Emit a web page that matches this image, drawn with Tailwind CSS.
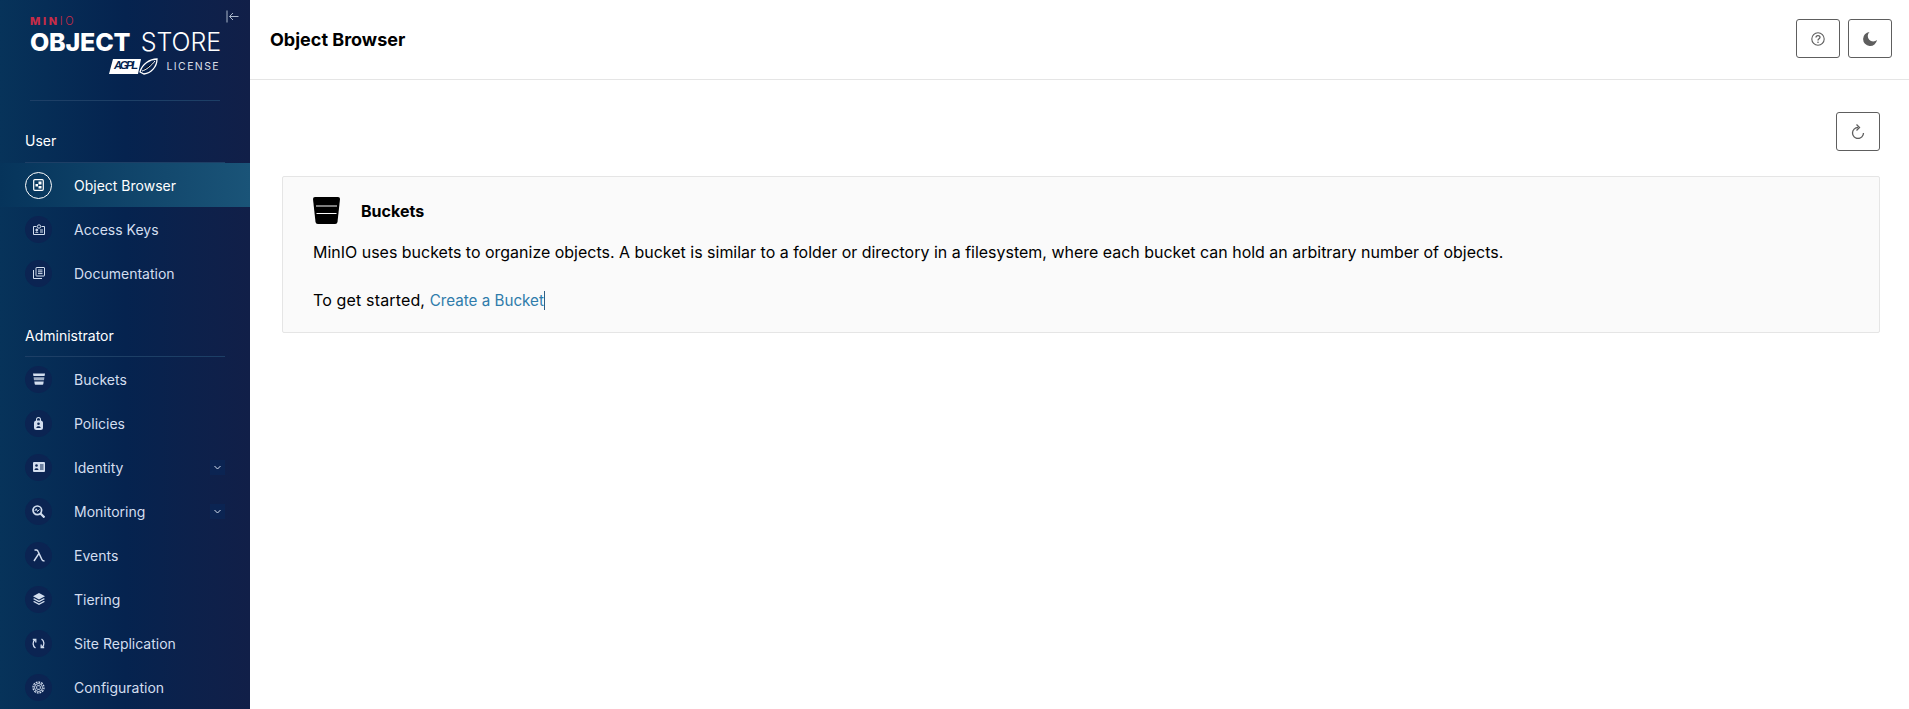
<!DOCTYPE html>
<html lang="en">
<head>
  <meta charset="UTF-8" />
  <title>MinIO Object Store</title>
  <script src="https://cdn.jsdelivr.net/npm/@tailwindcss/browser@4"></script>
</head>
<body class="bg-white text-black font-['Inter',sans-serif] h-[709px] overflow-hidden">
<div class="flex h-[709px]">

  <!-- Sidebar -->
  <aside class="w-[250px] shrink-0 h-full relative overflow-hidden bg-gradient-to-r from-[#07335a] via-[#05234f] to-[#111f48] text-[#d3deef]">
    <button class="absolute left-[226px] top-[10px] text-[#a9b6c9]">
      <svg width="13" height="13" viewBox="0 0 13 13" fill="none" stroke="currentColor" stroke-width="1"><path d="M1 .5v12M12.500 6.500H3.500M7 3 3.500 6.500 7 10"/></svg>
    </button>

    <!-- Logo -->
    <div class="h-[100px] pl-[30px]">
      <div class="pt-[15px] h-[27px] text-[#c72c48] text-[11px] leading-[12px] tracking-[2.600px]"><span class="font-extrabold">MIN</span><span class="font-light">IO</span></div>
      <div class="flex justify-between items-center h-[24px] mt-[3px] text-white text-[25px] leading-[24px] whitespace-nowrap w-[191px]"><span class="font-extrabold tracking-[-0.2px]">OBJECT</span><span class="font-light tracking-[-0.1px]">STORE</span></div>
      <div class="flex justify-end items-center gap-[9px] w-[190px] mt-[4px]">
        <svg width="49" height="17" viewBox="0 0 49 17">
          <path d="M4 1h28l-3 15H0z" fill="#fff"/>
          <text x="5" y="11" font-size="11" font-style="italic" font-weight="700" font-family="Liberation Sans" fill="#05234f" textLength="24">AGPL</text>
          <path d="M31 14C33 6 41 1 48 1c0 8-6 14-13 15z" fill="none" stroke="#fff" stroke-width="1.300"/>
          <path d="M33 13c4-1 9-5 13-10" stroke="#fff" stroke-width="1"/>
        </svg>
        <span class="text-[10.500px] leading-[14px] tracking-[1.400px] text-[#d9dfe8]">LICENSE</span>
      </div>
    </div>

    <div class="mx-[30px] border-t border-[#1d3f66]"></div>

    <!-- User -->
    <div class="mt-[31px] mx-[25px] h-[31px] border-b border-[#1d3f66] text-white text-[14px] leading-[18px] w-[200px]">User</div>
    <nav>
      <a class="h-[44px] flex items-center pl-[25px] bg-gradient-to-r from-[#06345b] to-[#1a5478] text-white">
        <span class="w-[27px] h-[27px] rounded-full border border-white flex items-center justify-center">
          <svg width="11" height="12" viewBox="0 0 11 12" fill="none"><rect x=".7" y=".7" width="9.600" height="10.600" rx="1" stroke="#fff" stroke-width="1.200"/><rect x="5.500" y="2.500" width="3" height="3" fill="#fff"/><rect x="2.500" y="5" width="2.500" height="2.500" fill="#fff"/><rect x="5.500" y="7" width="3" height="2.500" fill="#fff"/></svg>
        </span>
        <span class="ml-[22px] text-[14px]">Object Browser</span>
      </a>
      <a class="h-[44px] flex items-center pl-[25px]">
        <span class="w-[27px] h-[27px] rounded-full bg-[#0b2452] flex items-center justify-center">
          <svg width="12" height="11" viewBox="0 0 12 11" fill="none" stroke="#d3deef"><path d="M3.500 2.500H.5v8h11v-8H8.500"/><circle cx="6" cy="2.500" r="1.700"/><circle cx="3.800" cy="6" r="1" fill="#d3deef"/><path d="M2.300 9c.3-1 2.700-1 3 0M7 6h3M7 8h3"/></svg>
        </span>
        <span class="ml-[22px] text-[14px]">Access Keys</span>
      </a>
      <a class="h-[44px] flex items-center pl-[25px]">
        <span class="w-[27px] h-[27px] rounded-full bg-[#0b2452] flex items-center justify-center">
          <svg width="12" height="12" viewBox="0 0 12 12" fill="none" stroke="#d3deef"><rect x="3" y=".5" width="8.500" height="8.500" rx=".5"/><path d="M.5 3v8.500H9M5 3h4.500M5 4.800h4.500M5 6.600h4.500"/></svg>
        </span>
        <span class="ml-[22px] text-[14px]">Documentation</span>
      </a>
    </nav>

    <!-- Administrator -->
    <div class="mt-[31px] mx-[25px] h-[31px] border-b border-[#1d3f66] text-white text-[14px] leading-[20px] w-[200px]">Administrator</div>
    <nav>
      <a class="h-[44px] flex items-center pl-[25px]">
        <span class="w-[27px] h-[27px] rounded-full bg-[#0b2452] flex items-center justify-center">
          <svg width="12" height="12" viewBox="0 0 12 12" fill="#d3deef"><path d="M0 .5h12L11.600 3H.4z"/><path d="M.6 4.300h10.800L11 7.300H1z" opacity=".75"/><path d="M1.300 8.500h9.400L10.300 11q-.1.800-.8.800h-7q-.7 0-.8-.8z"/></svg>
        </span>
        <span class="ml-[22px] text-[14px]">Buckets</span>
      </a>
      <a class="h-[44px] flex items-center pl-[25px]">
        <span class="w-[27px] h-[27px] rounded-full bg-[#0b2452] flex items-center justify-center">
          <svg width="9" height="13" viewBox="0 0 9 13" fill="#d3deef"><path d="M2 4V2.500a2.500 2.500 0 0 1 5 0V4h-1V2.500a1.500 1.500 0 0 0-3 0V4z"/><rect y="3.500" width="9" height="9.500" rx="2.500"/><circle cx="4.500" cy="6.800" r="1.300" fill="#0b2452"/><path d="M2.300 11c0-2.400 4.400-2.400 4.400 0z" fill="#0b2452"/></svg>
        </span>
        <span class="ml-[22px] text-[14px]">Policies</span>
      </a>
      <a class="h-[44px] flex items-center pl-[25px] pr-[25px]">
        <span class="w-[27px] h-[27px] rounded-full bg-[#0b2452] flex items-center justify-center">
          <svg width="12" height="10" viewBox="0 0 12 10" fill="#d3deef"><path d="M1 0h10q1 0 1 1v8q0 1-1 1H1q-1 0-1-1V1q0-1 1-1z"/><circle cx="3.500" cy="3.500" r="1.300" fill="#0b2452"/><path d="M1.500 8c0-2.500 4-2.500 4 0z" fill="#0b2452"/><rect x="7" y="2.500" width="3.500" height="1" fill="#0b2452"/><rect x="7" y="4.500" width="3.500" height="1" fill="#0b2452"/><rect x="7" y="6.500" width="3.500" height="1" fill="#0b2452"/></svg>
        </span>
        <span class="ml-[22px] text-[14px]">Identity</span>
        <span class="ml-auto w-[15px] h-[15px] bg-[#0b2452] flex items-center justify-center">
          <svg width="7" height="5" viewBox="0 0 7 5" fill="none" stroke="#d3deef"><path d="M.5 1 3.500 4 6.500 1"/></svg>
        </span>
      </a>
      <a class="h-[44px] flex items-center pl-[25px] pr-[25px]">
        <span class="w-[27px] h-[27px] rounded-full bg-[#0b2452] flex items-center justify-center">
          <svg width="13" height="13" viewBox="0 0 13 13" fill="none" stroke="#d3deef" stroke-width="1.700"><circle cx="5.300" cy="5.300" r="4.300"/><path d="M8.500 8.500l4 4" stroke-width="2.200"/><path d="M2.800 6 4.300 3.800 5.500 6.500 7.500 4.500" stroke-width="1"/></svg>
        </span>
        <span class="ml-[22px] text-[14px]">Monitoring</span>
        <span class="ml-auto w-[15px] h-[15px] bg-[#0b2452] flex items-center justify-center">
          <svg width="7" height="5" viewBox="0 0 7 5" fill="none" stroke="#d3deef"><path d="M.5 1 3.500 4 6.500 1"/></svg>
        </span>
      </a>
      <a class="h-[44px] flex items-center pl-[25px]">
        <span class="w-[27px] h-[27px] rounded-full bg-[#0b2452] flex items-center justify-center">
          <svg width="12" height="13" viewBox="0 0 12 13" fill="none" stroke="#d3deef" stroke-width="1.500"><path d="M1.500 1H3.500Q4.500 1 5 2.300L9 10.700Q9.400 12 11.500 12M5.800 4.700 1 12"/></svg>
        </span>
        <span class="ml-[22px] text-[14px]">Events</span>
      </a>
      <a class="h-[44px] flex items-center pl-[25px]">
        <span class="w-[27px] h-[27px] rounded-full bg-[#0b2452] flex items-center justify-center">
          <svg width="12" height="12" viewBox="0 0 12 12" fill="#d3deef"><path d="M6 0 12 3.200 6 6.400 0 3.200z"/><path d="M1.300 5.300 6 7.800l4.700-2.500L12 6 6 9.200 0 6z"/><path d="M1.300 8.100 6 10.600l4.700-2.500L12 8.800 6 12 0 8.800z"/></svg>
        </span>
        <span class="ml-[22px] text-[14px]">Tiering</span>
      </a>
      <a class="h-[44px] flex items-center pl-[25px]">
        <span class="w-[27px] h-[27px] rounded-full bg-[#0b2452] flex items-center justify-center">
          <svg width="13" height="13" viewBox="0 0 13 13" fill="none" stroke="#d3deef" stroke-width="1.300"><path d="M3.500 11A5.300 5.300 0 0 1 3 2.500"/><path d="M9.500 2A5.300 5.300 0 0 1 10 10.500"/><path d="M.8 2.500H3.800V5.500M12.200 10.500H9.200V7.500"/></svg>
        </span>
        <span class="ml-[22px] text-[14px]">Site Replication</span>
      </a>
      <a class="h-[44px] flex items-center pl-[25px]">
        <span class="w-[27px] h-[27px] rounded-full bg-[#0b2452] flex items-center justify-center">
          <svg width="13" height="13" viewBox="0 0 13 13" fill="none" stroke="#d3deef"><rect x="4.700" y="4.700" width="3.600" height="3.600" rx=".8"/><circle cx="6.500" cy="6.500" r="4"/><circle cx="6.500" cy="6.500" r="5.500" stroke-dasharray="1.800 1" stroke-width="1.300"/></svg>
        </span>
        <span class="ml-[22px] text-[14px]">Configuration</span>
      </a>
    </nav>
  </aside>

  <!-- Main -->
  <main class="flex-1 min-w-0">
    <header class="h-[80px] border-b border-[#e5e5e5] flex items-center justify-between pl-[20px] pr-[17px]">
      <h1 class="text-[18px] font-bold">Object Browser</h1>
      <div class="flex gap-[8px] -mt-[2px]">
        <button class="w-[44px] h-[39px] border border-[#5e5e5e] rounded-[3px] flex items-center justify-center">
          <svg width="14" height="14" viewBox="0 0 14 14" fill="none" stroke="#5e5e5e" stroke-width="1.100"><circle cx="7" cy="7" r="6.200"/><path d="M5 5.500C5 3 9 3 9 5.300 9 6.800 7 6.800 7 8.500" stroke-width="1.300"/><circle cx="7" cy="10.300" r=".8" fill="#5e5e5e" stroke="none"/></svg>
        </button>
        <button class="w-[44px] h-[39px] border border-[#5e5e5e] rounded-[3px] flex items-center justify-center">
          <svg width="14" height="14" viewBox="0 0 14 14" fill="#5e5e5e"><path d="M6.500 0A7 7 0 1 0 14 8 5.200 5.200 0 0 1 6.500 0z"/></svg>
        </button>
      </div>
    </header>

    <div class="px-[32px] pt-[32px]">
      <div class="flex justify-end -mr-[3px]">
        <button class="w-[44px] h-[39px] border border-[#5e5e5e] rounded-[3px] flex items-center justify-center">
          <svg width="14" height="15" viewBox="0 0 14 15" fill="none" stroke="#5e5e5e" stroke-width="1.300"><path d="M7 3.500A5.500 5.500 0 1 0 12.500 9"/><path d="M5.500 .5 8.500 3.500 5.500 6.500"/></svg>
        </button>
      </div>

      <section class="mt-[25px] h-[157px] w-[1598px] border border-[#e5e5e5] rounded-[2px] bg-[#fafafa] pl-[30px] pt-[20px] text-[16px]">
        <div class="flex items-center h-[27px] gap-[21px]">
          <svg width="27" height="27" viewBox="0 0 27 27"><path d="M2 0h23q2 0 2 2L24.500 25q-.3 2-2.300 2H4.800q-2 0-2.300-2L0 2Q0 0 2 0z" fill="#000"/><path d="M3 9h21M3.500 16.500h20" stroke="#fafafa" stroke-width="1.200"/></svg>
          <span class="font-bold">Buckets</span>
        </div>
        <p class="mt-[17px] leading-[24px] text-[15.970px]">MinIO uses buckets to organize objects. A bucket is similar to a folder or directory in a filesystem, where each bucket can hold an arbitrary number of objects.</p>
        <p class="mt-[23px] leading-[24px]"><span class="tracking-[0.15px]">To get started,</span> <a class="text-[#2f7cab] text-[15.200px] border-r border-[#2f5f85]">Create a Bucket</a></p>
      </section>
    </div>
  </main>
</div>
</body>
</html>
